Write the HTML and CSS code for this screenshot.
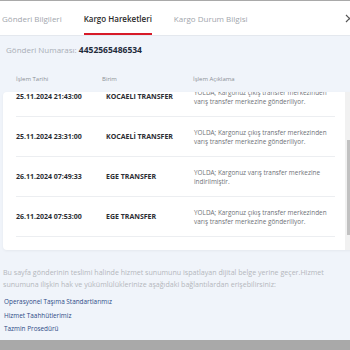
FILE: index.html
```html
<!DOCTYPE html>
<html lang="tr">
<head>
  <meta charset="UTF-8" />
  <meta name="viewport" content="width=device-width, initial-scale=1.0"/>
  <title>Kargo Hareketleri</title>
  <link rel="stylesheet" href="styles.css">
</head>
<body>
  <div class="modal">
    <div class="tabs">
      <div class="tab">Gönderi Bilgileri</div>
      <div class="tab active">Kargo Hareketleri</div>
      <div class="tab">Kargo Durum Bilgisi</div>
      <button class="close-btn" aria-label="Kapat">
        <svg width="9" height="9" viewBox="0 0 9 9"><path d="M1 1L8 8M8 1L1 8" stroke="#555" stroke-width="1.2" fill="none"/></svg>
      </button>
    </div>

    <div class="modal-body">
      <p class="tracking-no">Gönderi Numarası: <strong>4452565486534</strong></p>

      <div class="table-head">
        <span class="col-date">İşlem Tarihi</span>
        <span class="col-unit">Birim</span>
        <span class="col-desc">İşlem Açıklama</span>
      </div>

      <div class="card">
        <div class="rows" id="rows">
          <div class="row">
            <span class="col-date">25.11.2024 18:12:45</span>
            <span class="col-unit">GEBZE ŞUBE</span>
            <span class="col-desc">ÇIKIŞ ŞUBESİNDE; Kargonuz çıkış şubesinden transfer merkezine gönderiliyor.</span>
          </div>
          <div class="row">
            <span class="col-date">25.11.2024 21:43:00</span>
            <span class="col-unit">KOCAELI TRANSFER</span>
            <span class="col-desc">YOLDA; Kargonuz çıkış transfer merkezinden varış transfer merkezine gönderiliyor.</span>
          </div>
          <div class="row">
            <span class="col-date">25.11.2024 23:31:00</span>
            <span class="col-unit">KOCAELİ TRANSFER</span>
            <span class="col-desc">YOLDA; Kargonuz çıkış transfer merkezinden varış transfer merkezine gönderiliyor.</span>
          </div>
          <div class="row">
            <span class="col-date">26.11.2024 07:49:33</span>
            <span class="col-unit">EGE TRANSFER</span>
            <span class="col-desc">YOLDA; Kargonuz varış transfer merkezine indirilmiştir.</span>
          </div>
          <div class="row">
            <span class="col-date">26.11.2024 07:53:00</span>
            <span class="col-unit">EGE TRANSFER</span>
            <span class="col-desc">YOLDA; Kargonuz çıkış transfer merkezinden varış transfer merkezine gönderiliyor.</span>
          </div>
        </div>
        <div class="scrollbar">
          <div class="sb-arrow">▲</div>
          <div class="sb-track"><div class="sb-thumb"></div></div>
          <div class="sb-arrow">▼</div>
        </div>
      </div>

      <p class="note">Bu sayfa gönderinin teslimi halinde hizmet sunumunu ispatlayan dijital belge yerine geçer.Hizmet sunumuna ilişkin hak ve yükümlülüklerinize aşağıdaki bağlantılardan erişebilirsiniz:</p>

      <ul class="links">
        <li><a href="#">Operasyonel Taşıma Standartlarımız</a></li>
        <li><a href="#">Hizmet Taahhütlerimiz</a></li>
        <li><a href="#">Tazmin Prosedürü</a></li>
      </ul>
    </div>
  </div>

  <script>
    // Keep the movements list scrolled to the latest entry
    const rows = document.getElementById('rows');
    rows.scrollTop = rows.scrollHeight;
  </script>
</body>
</html>
```

FILE: styles.css
```css
body {
  margin: 0;
  padding: 0;
  background: #a9a9a9;
  font-family: 'Open Sans', sans-serif;
  overflow: hidden;
  height: 350px;
}

.modal {
  width: 360px;
  margin-top: 1px;
  height: 339px;
  background: #f0f4fa;
  display: flex;
  flex-direction: column;
}

.tabs {
  display: flex;
  align-items: stretch;
  gap: 22px;
  height: 34px;
  padding-left: 2px;
  background: #fff;
  border-bottom: 1px solid #e4e8ee;
}

.tab {
  display: flex;
  align-items: center;
  font-size: 8px;
  color: #a2a6ad;
  border-bottom: 2px solid transparent;
  padding-top: 2px;
}

.tab.active {
  color: #2a2a2a;
  font-weight: 600;
  border-bottom-color: #d71a28;
}

.close-btn {
  margin-left: auto;
  margin-right: 6px;
  background: none;
  border: none;
  padding: 0;
  display: flex;
  align-items: center;
}

.modal-body {
  padding: 0 0 0 3px;
}

.tracking-no {
  margin: 8px 0 0 3px;
  font-size: 8px;
  color: #a9aeb6;
  line-height: 11px;
}

.tracking-no strong {
  color: #1f2b3b;
  font-size: 8.5px;
}

.table-head {
  display: flex;
  margin-top: 18px;
  height: 12px;
  align-items: center;
  font-size: 6px;
  color: #8c9096;
}

.table-head .col-date { width: 86px; padding-left: 13px; }
.table-head .col-unit { width: 91px; }

.card {
  display: flex;
  margin-top: 7px;
  height: 158px;
  background: #fff;
  border-radius: 4px;
  box-shadow: 0 1px 3px rgba(0, 0, 0, 0.05);
  overflow: hidden;
}

.rows {
  flex: 1;
  overflow-y: auto;
  scrollbar-width: none;
  padding: 0 10px 13px 13px;
}

.row {
  display: flex;
  align-items: center;
  height: 40px;
  border-bottom: 1px solid #eceef1;
  box-sizing: border-box;
}

.row .col-date {
  width: 90px;
  font-size: 7px;
  font-weight: 700;
  color: #2b2d33;
}

.row .col-unit {
  width: 88px;
  font-size: 7px;
  font-weight: 700;
  color: #2b2d33;
}

.row .col-desc {
  flex: 1;
  font-size: 6.4px;
  line-height: 9px;
  color: #6e7177;
  padding-right: 6px;
}

.scrollbar {
  width: 15px;
  display: flex;
  flex-direction: column;
  background: #f1f1f1;
}

.sb-arrow {
  height: 12px;
  font-size: 5px;
  color: #a3a3a3;
  display: flex;
  align-items: center;
  justify-content: center;
}

.sb-track {
  flex: 1;
  display: flex;
  flex-direction: column;
  justify-content: flex-end;
  padding: 0 2px 3px;
}

.sb-thumb {
  height: 95px;
  background: #c1c1c1;
}

.note {
  margin: 16px 18px 0 0;
  font-size: 7.1px;
  line-height: 12px;
  color: #b4b7bc;
}

.links {
  list-style: none;
  margin: 5px 0 0 1px;
  padding: 0;
}

.links li {
  height: 13.5px;
  line-height: 13.5px;
  font-size: 6.4px;
}

.links a {
  color: #2d4a86;
  text-decoration: none;
}
```
